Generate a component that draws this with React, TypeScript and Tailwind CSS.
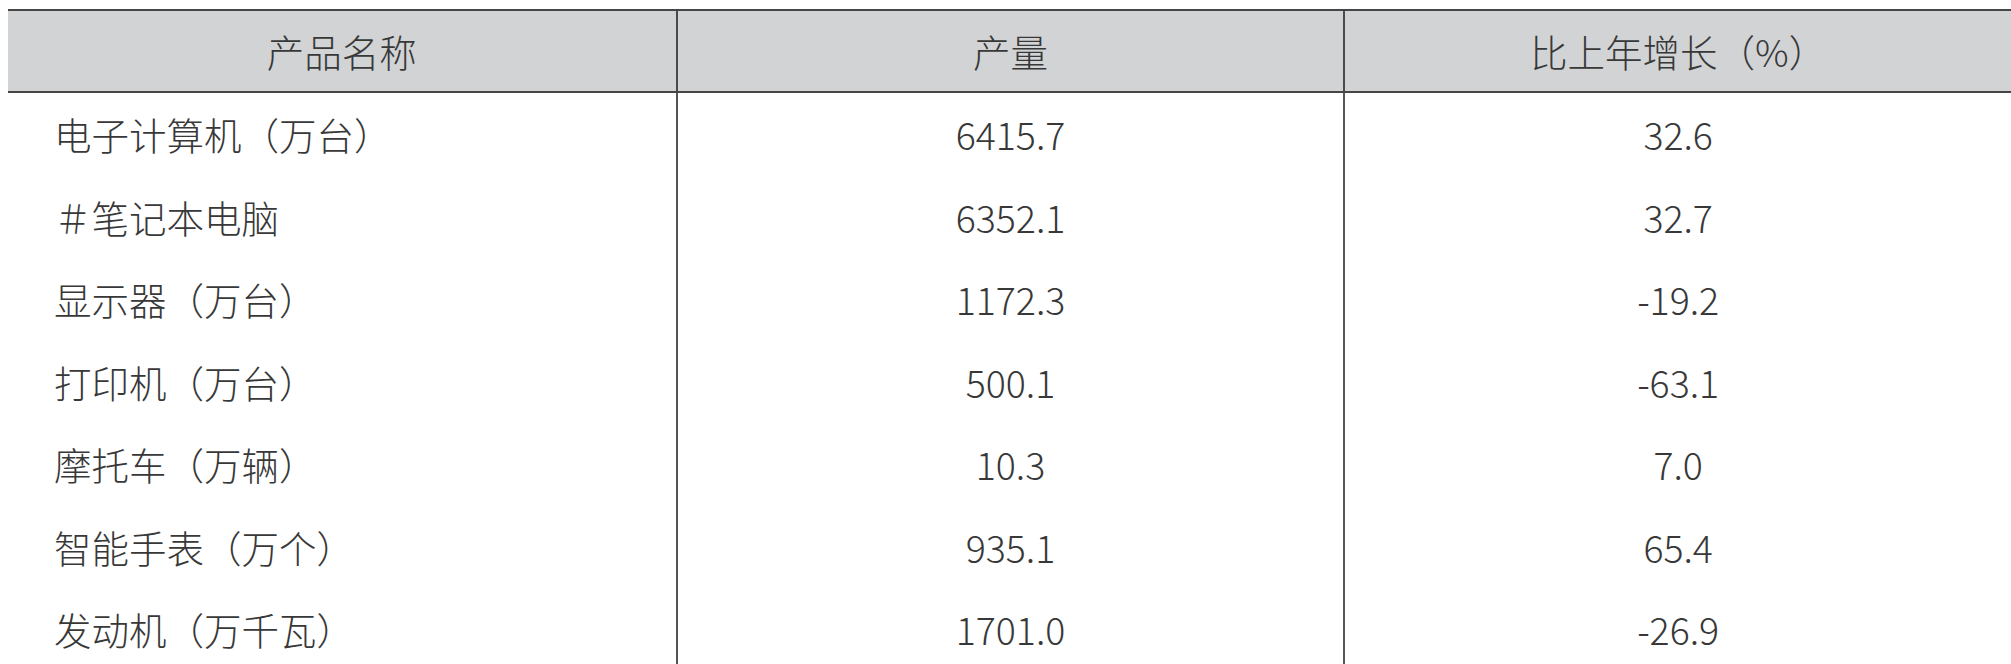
import React from "react";

const rows: [string, string, string][] = [
  ["电子计算机（万台）", "6415.7", "32.6"],
  ["＃笔记本电脑", "6352.1", "32.7"],
  ["显示器（万台）", "1172.3", "-19.2"],
  ["打印机（万台）", "500.1", "-63.1"],
  ["摩托车（万辆）", "10.3", "7.0"],
  ["智能手表（万个）", "935.1", "65.4"],
  ["发动机（万千瓦）", "1701.0", "-26.9"],
];

export default function App() {
  return (
    <div className="h-[664px] overflow-hidden bg-white pt-[9px] pl-[8px]">
      <div className="w-[2003px] font-['Noto_Sans_CJK_SC','Noto_Sans',sans-serif] text-[37.5px] font-light text-[#383838]">
        <div className="grid h-[84px] grid-cols-3 border-y-2 border-[#454545] bg-[#d1d3d5]">
          <div className="flex items-center justify-center">产品名称</div>
          <div className="flex items-center justify-center border-l-2 border-[#4a4a4a]">产量</div>
          <div className="flex items-center justify-center border-l-2 border-[#4a4a4a]">比上年增长（%）</div>
        </div>
        {rows.map((r, i) => (
          <div key={i} className="grid h-[82.5px] grid-cols-3">
            <div className="flex items-center pl-[46px]">{r[0]}</div>
            <div className="flex items-center justify-center border-l-2 border-[#555555]">{r[1]}</div>
            <div className="flex items-center justify-center border-l-2 border-[#555555]">{r[2]}</div>
          </div>
        ))}
      </div>
    </div>
  );
}
